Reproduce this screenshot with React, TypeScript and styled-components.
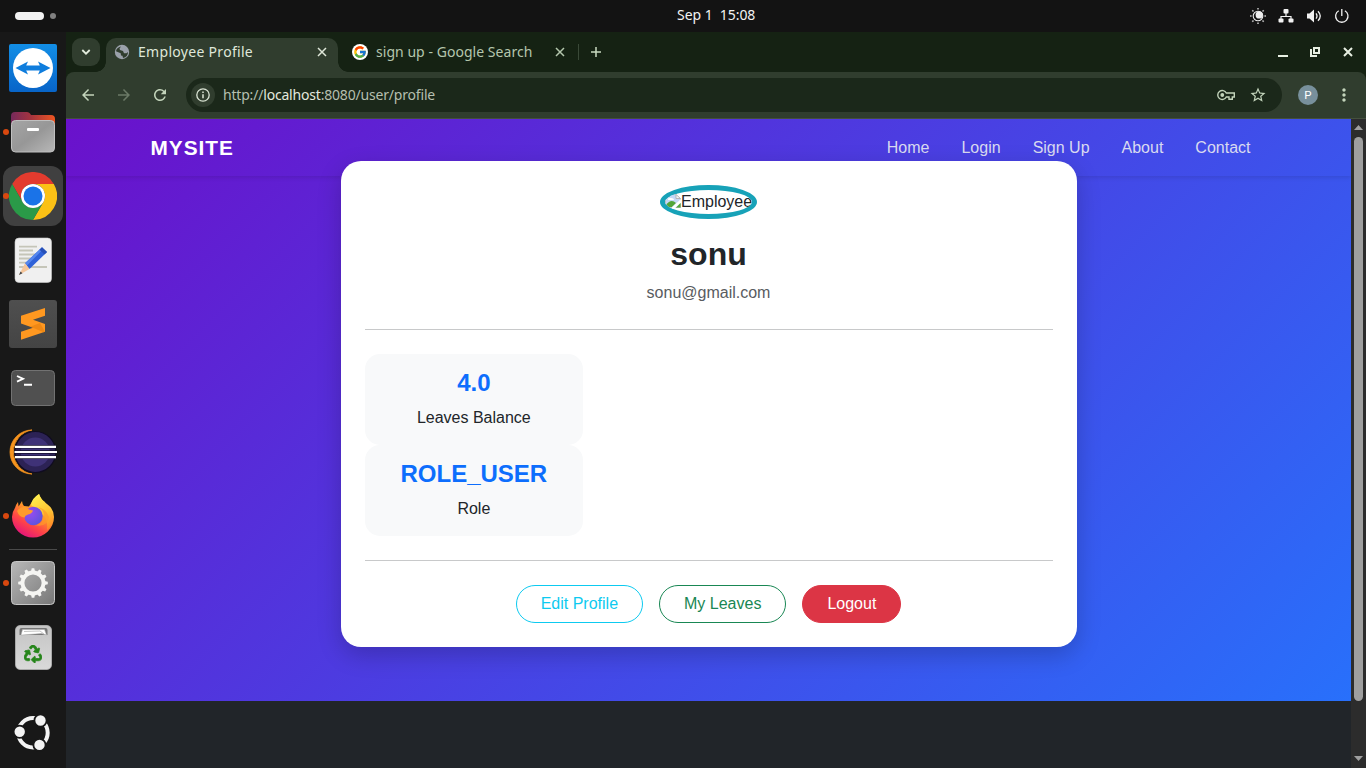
import React from "react";
import styled, { createGlobalStyle } from "styled-components";
import { MdArrowBack, MdArrowForward, MdRefresh, MdStarBorder, MdMoreVert } from "react-icons/md";
import { FaRecycle } from "react-icons/fa";
import { FcGoogle } from "react-icons/fc";

const GlobalStyle = createGlobalStyle`
  * { box-sizing: border-box; }
  body { margin: 0; background: #131313; overflow: hidden; }
  svg { display: block; flex: none; }
  button { font: inherit; }
`;

const uiFont = `"Noto Sans", "Open Sans", sans-serif`;

const Desktop = styled.div`
  width: 1366px;
  height: 768px;
  display: flex;
  flex-direction: column;
  overflow: hidden;
  font-family: ${uiFont};
`;

/* ---------- system bar ---------- */
const TopBar = styled.header`
  height: 32px;
  display: flex;
  align-items: center;
  background: #131313;
  color: #f2f2f2;
`;
const Workspaces = styled.div`
  width: 677px;
  padding-left: 15px;
  display: flex;
  align-items: center;
  gap: 6px;
`;
const WorkspaceDot = styled.span<{ $active?: boolean }>`
  width: ${(p) => (p.$active ? 29 : 6)}px;
  height: ${(p) => (p.$active ? 8 : 6)}px;
  border-radius: 4px;
  background: ${(p) => (p.$active ? "#f2f2f2" : "#808080")};
`;
const Clock = styled.div`
  flex: 1;
  font-size: 14px;
  line-height: 20px;
  letter-spacing: -0.05px;
  white-space: pre;
  padding-bottom: 2px;
`;
const Tray = styled.div`
  display: flex;
  align-items: center;
  gap: 12px;
  padding: 0 16px 1px 0;
`;

/* ---------- dock ---------- */
const Workarea = styled.div`
  flex: 1;
  display: flex;
  min-height: 0;
`;
const Dock = styled.aside`
  width: 66px;
  padding-top: 4px;
  display: flex;
  flex-direction: column;
  align-items: center;
  background: #181818;
`;
const DockItem = styled.div<{ $last?: boolean }>`
  position: relative;
  width: 66px;
  height: 64px;
  display: flex;
  align-items: center;
  justify-content: center;
  margin-top: ${(p) => (p.$last ? "22px" : "0")};
`;
const DockTile = styled.div<{ $focused?: boolean }>`
  width: 60px;
  height: 60px;
  display: flex;
  align-items: center;
  justify-content: center;
  border-radius: 12px;
  background: ${(p) => (p.$focused ? "#404040" : "transparent")};
`;
const RunningDot = styled.span`
  position: absolute;
  left: 3px;
  top: 29px;
  width: 6px;
  height: 6px;
  border-radius: 50%;
  background: #d9480f;
`;
const DockRule = styled.hr`
  width: 48px;
  height: 1px;
  margin: 1px 0;
  border: 0;
  background: #4a4a4a;
`;
const TrashCan = styled.div`
  width: 37px;
  height: 45px;
  border-radius: 5px;
  border: 1px solid #a9a9a9;
  background: linear-gradient(#c4c4c4, #d9d9d9);
  display: flex;
  flex-direction: column;
  align-items: center;
  gap: 9px;
  color: #26851a;
`;

/* ---------- browser ---------- */
const Browser = styled.main`
  flex: 1;
  min-width: 0;
  display: flex;
  flex-direction: column;
  background: #152213;
`;
const TabStrip = styled.div`
  height: 40px;
  display: flex;
  align-items: flex-start;
  padding: 6px 13px 0 6px;
  color: #b4c6ad;
`;
const TabSearch = styled.button`
  width: 28px;
  height: 28px;
  padding: 0;
  margin-right: 6px;
  border: 0;
  border-radius: 9px;
  background: #303d2e;
  color: #e3ecdd;
  display: flex;
  align-items: center;
  justify-content: center;
`;
const Tab = styled.div<{ $active?: boolean }>`
  position: relative;
  width: ${(p) => (p.$active ? 232 : 240)}px;
  height: ${(p) => (p.$active ? 34 : 28)}px;
  padding: ${(p) => (p.$active ? "0 11px 6px 8px" : "0 13px 0 14px")};
  border-radius: 10px 10px 0 0;
  background: ${(p) => (p.$active ? "#303d2e" : "transparent")};
  color: ${(p) => (p.$active ? "#dfe7d9" : "#b4c6ad")};
  display: flex;
  align-items: center;
  gap: 8px;
  &::before, &::after {
    content: "";
    display: ${(p) => (p.$active ? "block" : "none")};
    position: absolute;
    bottom: 0;
    width: 10px;
    height: 10px;
  }
  &::before { left: -10px; background: radial-gradient(circle at 0 0, transparent 9.5px, #303d2e 10px); }
  &::after { right: -10px; background: radial-gradient(circle at 100% 0, transparent 9.5px, #303d2e 10px); }
`;
const TabTitle = styled.span<{ $spacing: number }>`
  flex: 1;
  font-size: 14px;
  line-height: 20px;
  letter-spacing: ${(p) => p.$spacing}px;
  white-space: nowrap;
`;
const GoogleBadge = styled.span`
  width: 16px;
  height: 16px;
  border-radius: 50%;
  background: #fff;
  display: flex;
  align-items: center;
  justify-content: center;
`;
const NewTab = styled.div`
  height: 28px;
  display: flex;
  align-items: center;
  gap: 12px;
  flex: 1;
`;
const TabDivider = styled.span`
  width: 1px;
  height: 16px;
  background: #3a4938;
`;
const WindowButtons = styled.div`
  height: 28px;
  display: flex;
  align-items: center;
  gap: 20px;
  color: #e7efe2;
  svg:last-child { margin-left: 2px; }
`;
const Toolbar = styled.div`
  height: 47px;
  padding: 0 10px 0 10px;
  border-bottom: 1px solid #45503f;
  border-radius: 8px 8px 0 0;
  background: #303d2e;
  display: flex;
  align-items: center;
  color: #c3d4bb;
`;
const NavButton = styled.span<{ $dim?: boolean }>`
  width: 24px;
  height: 24px;
  margin-right: 12px;
  display: flex;
  align-items: center;
  justify-content: center;
  opacity: ${(p) => (p.$dim ? 0.4 : 1)};
`;
const Omnibox = styled.div`
  width: 1096px;
  height: 34px;
  margin-left: 2px;
  padding: 0 15px 0 5px;
  border-radius: 17px;
  background: #1b281a;
  display: flex;
  align-items: center;
`;
const SiteInfo = styled.span`
  width: 24px;
  height: 24px;
  border-radius: 50%;
  background: #303d2e;
  display: flex;
  align-items: center;
  justify-content: center;
`;
const Url = styled.span`
  flex: 1;
  margin-left: 8px;
  font-size: 14px;
  line-height: 20px;
  letter-spacing: -0.19px;
  color: #b5bfaf;
  b { font-weight: 400; color: #e3e9df; }
`;
const OmniActions = styled.span`
  display: flex;
  align-items: center;
  gap: 14px;
`;
const Avatar = styled.span`
  width: 20px;
  height: 20px;
  margin: 0 16px;
  border-radius: 50%;
  background: #78909c;
  color: #fff;
  font: 11.5px/20px Roboto, sans-serif;
  text-align: center;
`;
const Viewport = styled.div`
  flex: 1;
  min-height: 0;
  display: flex;
`;
const Scrollbar = styled.div`
  width: 15px;
  padding: 6px 0 7px;
  background: #2c2c2c;
  display: flex;
  flex-direction: column;
  align-items: center;
`;
const Thumb = styled.span`
  width: 9px;
  height: 564px;
  margin: 7px 0 auto;
  border-radius: 5px;
  background: #9f9f9f;
`;

/* ---------- site ---------- */
const Page = styled.div`
  flex: 1;
  background: #212529;
  color: #212529;
  font: 16px/24px "Liberation Sans", Arial, sans-serif;
`;
const Backdrop = styled.div`
  height: 582px;
  background: linear-gradient(135deg, #6a11cb, #2870fb);
`;
const SiteNav = styled.nav`
  height: 57px;
  box-shadow: 0 2px 4px rgba(0, 0, 0, 0.1);
`;
const NavInner = styled.div`
  width: 1140px;
  height: 58px;
  margin: 0 auto;
  padding: 0 12px;
  display: flex;
  align-items: center;
  justify-content: space-between;
`;
const Brand = styled.a`
  font-size: 20.8px;
  font-weight: 700;
  letter-spacing: 1px;
  color: #fff;
`;
const NavLinks = styled.div`
  display: flex;
`;
const NavLink = styled.a`
  padding: 0 16px;
  color: #d9daf0;
`;
const Card = styled.section`
  width: 736px;
  height: 486px;
  margin: -15px auto 0;
  padding: 24px;
  position: relative;
  border-radius: 20px;
  background: #fff;
  box-shadow: 0 8px 25px rgba(0, 0, 0, 0.2);
  display: flex;
  flex-direction: column;
  align-items: center;
`;
const Portrait = styled.div`
  width: 97px;
  height: 34px;
  border: 5px solid #17a2b8;
  border-radius: 50%;
  overflow: hidden;
  display: flex;
  white-space: nowrap;
  svg { margin-top: 3px; }
`;
const Name = styled.h2`
  margin: 16px 0 8px;
  font-size: 32px;
  line-height: 38.4px;
  font-weight: 700;
`;
const Email = styled.p`
  margin: 0;
  color: #595c5f;
`;
const Rule = styled.hr`
  width: 100%;
  height: 1px;
  margin: 24px 0;
  border: 0;
  flex: none;
  background: #c8c9ca;
`;
const Stats = styled.div`
  align-self: stretch;
  display: flex;
  flex-direction: column;
  align-items: flex-start;
`;
const Stat = styled.div`
  width: 218.66px;
  padding: 15px;
  border-radius: 15px;
  background: #f8f9fa;
  text-align: center;
`;
const StatValue = styled.h4`
  margin: 0 0 8px;
  font-size: 24px;
  line-height: 28.8px;
  font-weight: 700;
  color: #0d6efd;
`;
const Actions = styled.div`
  display: flex;
  gap: 16px;
`;
const Action = styled.button<{ $color: string; $solid?: boolean }>`
  height: 38px;
  padding: 0 24px;
  border: 1px solid ${(p) => p.$color};
  border-radius: 50px;
  background: ${(p) => (p.$solid ? p.$color : "transparent")};
  color: ${(p) => (p.$solid ? "#fff" : p.$color)};
`;

/* ---------- drawings ---------- */
const TeamViewerIcon = () => (
  <svg width="48" height="48" viewBox="0 0 48 48">
    <defs><linearGradient id="tv" x2="0" y2="1"><stop stopColor="#128ee6" /><stop offset="1" stopColor="#0864c8" /></linearGradient></defs>
    <rect width="48" height="48" rx="2" fill="url(#tv)" />
    <circle cx="24" cy="24" r="20" fill="#fff" />
    <path d="M6.5 24 19 17.5 17.2 21.5H30.8L29 17.5 41.5 24 29 30.5 30.8 26.5H17.2L19 30.5Z" fill="#0f7ddd" />
  </svg>
);
const FilesIcon = () => (
  <svg width="48" height="48" viewBox="0 0 48 48">
    <defs>
      <linearGradient id="fb"><stop stopColor="#75295b" /><stop offset=".45" stopColor="#a5343f" /><stop offset="1" stopColor="#ee5521" /></linearGradient>
      <linearGradient id="ff" x2="1" y2="1"><stop stopColor="#a5a5a5" /><stop offset=".5" stopColor="#979797" /><stop offset="1" stopColor="#b8b8b8" /></linearGradient>
    </defs>
    <path d="M2 15V8q0-4 4-4h12q2 0 3 1.500l1 1.500h20q4 0 4 4v10H2Z" fill="url(#fb)" />
    <rect x="2.500" y="12.500" width="43" height="31.500" rx="4" fill="url(#ff)" stroke="#c0c0c0" />
    <rect x="18" y="20" width="12" height="3" rx="1" fill="#fff" />
  </svg>
);
const ChromeIcon = () => (
  <svg width="48" height="48" viewBox="0 0 48 48">
    <path d="M3.200 12A24 24 0 0 1 44.800 12H24A12 12 0 0 0 13.600 30Z" fill="#e33b2e" />
    <path d="M44.800 12A24 24 0 0 1 24 48L34.400 30A12 12 0 0 0 24 12Z" fill="#fbc116" />
    <path d="M24 48A24 24 0 0 1 3.200 12L13.600 30A12 12 0 0 0 34.400 30Z" fill="#2a9a48" />
    <circle cx="24" cy="24" r="12" fill="#fff" />
    <circle cx="24" cy="24" r="9.500" fill="#1a73e8" />
  </svg>
);
const EditorIcon = () => (
  <svg width="48" height="48" viewBox="0 0 48 48">
    <rect x="6" y="2" width="36.500" height="44.500" rx="4" fill="#f0f0f0" stroke="#cfcfcf" strokeWidth=".6" />
    <path d="M10 10.700h18M10 14.500h14M10 18.500h17M10 22.500h13M10 26.700h9M10 31h28" stroke="#c5c5b8" strokeWidth="1.800" />
    <path d="m33 11.300 5 4.700L20.500 33 16 27.300Z" fill="#2f62d8" />
    <path d="m31.500 12.700 1.800 1.300L18 29.500l-2-2.200Z" fill="#5587ee" />
    <path d="m33 11.300 5 4.700-2.500 2.500-5-4.700Z" fill="#2750b8" />
    <path d="M16 27.300 20.500 33 10 39Z" fill="#f4c59a" />
    <path d="m11.500 35.500 2 1.700L10 39Z" fill="#454545" />
  </svg>
);
const SublimeIcon = () => (
  <svg width="48" height="48" viewBox="0 0 48 48">
    <defs><linearGradient id="sb" x2="0" y2="1"><stop stopColor="#4f4f4f" /><stop offset="1" stopColor="#444" /></linearGradient></defs>
    <rect width="48" height="48" rx="3" fill="url(#sb)" />
    <path d="M12 15.700 36 8v7.700l-12 4 12 4.300v7.700l-24 8v-8l12-4-12-4.300Z" fill="#ff9820" />
    <path d="M21 26.700 31 23l5 8.700-1.500.5L24 27.700Z" fill="#e8810f" opacity=".7" />
  </svg>
);
const TerminalIcon = () => (
  <svg width="48" height="48" viewBox="0 0 48 48">
    <rect x="2.500" y="6.500" width="43" height="35" rx="4" fill="#505050" stroke="#727272" />
    <path d="m8 12 6 2.800-6 2.800M15 20.700h8" fill="none" stroke="#fff" strokeWidth="1.900" />
  </svg>
);
const EclipseIcon = () => (
  <svg width="48" height="48" viewBox="0 0 48 48">
    <path d="M23 2A22 22 0 0 0 23 46A22.300 22.300 0 0 1 23 2Z" fill="#f7941e" stroke="#f7941e" strokeWidth=".8" />
    <circle cx="26.300" cy="24" r="20.500" fill="#2c2255" stroke="#100c20" strokeWidth="1.200" />
    <circle cx="26.300" cy="24" r="14.500" fill="#3f3277" />
    <path d="M6.500 18.800h40.500M5.500 24h42M6.500 29.200h40.500" stroke="#17122e" strokeWidth="3.600" />
    <path d="M6 18.800h41M5.500 24h42.500M6 29.200h41" stroke="#fff" strokeWidth="2.200" />
  </svg>
);
const FirefoxIcon = () => (
  <svg width="48" height="48" viewBox="0 0 48 48">
    <defs>
      <linearGradient id="fx" x1=".8" y1=".1" x2=".3" y2=".98"><stop stopColor="#ffe548" /><stop offset=".4" stopColor="#ff9429" /><stop offset=".7" stopColor="#ff4547" /><stop offset="1" stopColor="#e51579" /></linearGradient>
      <linearGradient id="fy" x1=".3" y1="0" x2=".7" y2="1"><stop stopColor="#ffef50" /><stop offset=".6" stopColor="#ffc02e" /><stop offset="1" stopColor="#ff8a28" /></linearGradient>
      <radialGradient id="fp" cx=".3" cy=".3" r=".8"><stop stopColor="#9b4bf0" /><stop offset="1" stopColor="#5a54dc" /></radialGradient>
    </defs>
    <path d="M6 16q.5-3 3-6l.6 4.600L13 9q.2 3 2 5l5 .500Q24 7 30 2q2 6 8 10 7 5 7 13A21 20.500 0 0 1 3 25q0-5 3-9Z" fill="url(#fx)" />
    <path d="M22 13q1-7 8-11 1.500 5 6 8 .5 3 3 6 6 5 4.500 13-1 6-5.500 9 1-10-3-14-5-5-13-11Z" fill="url(#fy)" />
    <circle cx="24.500" cy="24" r="9.200" fill="url(#fp)" />
    <path d="M29 15q8 4 5 12-2 6-9 6 14 3 15-8-3-8-11-10Z" fill="#ff9a2a" opacity=".7" />
    <path d="M8 19q3-4 8-4.500 3 3.500 8 4-1 3-5 4-3 1-3.500 3Q10 25 8 19Z" fill="#ff9b2c" />
  </svg>
);
const teeth = Array.from({ length: 12 }, (_, i) => i * 30);
const SettingsIcon = () => (
  <svg width="48" height="48" viewBox="0 0 48 48">
    <defs><linearGradient id="st" x2="1" y2="1"><stop stopColor="#b8b8b8" /><stop offset="1" stopColor="#777" /></linearGradient></defs>
    <rect x="2.500" y="2.500" width="43" height="43" rx="4" fill="url(#st)" stroke="#c6c6c6" />
    <circle cx="24" cy="24" r="10.500" fill="none" stroke="#f5f5f2" strokeWidth="3.800" />
    {teeth.map((a) => <path key={a} d="m22 12.500.7-3.300h2.600l.7 3.300Z" fill="#f5f5f2" transform={`rotate(${a} 24 24)`} />)}
  </svg>
);
const UbuntuIcon = () => (
  <svg width="38" height="38" viewBox="0 0 38 38">
    <circle cx="19" cy="18.700" r="14.700" fill="none" stroke="#f4f4f4" strokeWidth="4" />
    {[[26.5, 6.5], [5.7, 17.8], [25.5, 30.9]].map(([x, y]) => (
      <circle key={y} cx={x} cy={y} r="6.100" fill="#f4f4f4" stroke="#181818" strokeWidth="1.800" />
    ))}
  </svg>
);
const GlobeIcon = () => (
  <svg width="16" height="16" viewBox="0 0 16 16">
    <circle cx="8" cy="8" r="7.200" fill="#9ba1ab" />
    <path d="M7 2.500 5.500 4.500 6 6l3 1 1 2.200h2.500L14 8q0 5-5 6l-.5-2.200L7 11.500l-.3-2.200L2 7.300Q2.500 3.500 7 2.500Z" fill="#303d2e" />
    <path d="M9 2.800 8 4.500l2 1.200 1.500 1.500L13.500 7Q13 4 9 2.800Z" fill="#9ba1ab" />
  </svg>
);
const Cross = ({ size, weight }: { size: number; weight: number }) => (
  <svg width={size} height={size} viewBox="0 0 10 10"><path d="m1 1 8 8M9 1 1 9" fill="none" stroke="currentColor" strokeWidth={weight} /></svg>
);
const BrokenImage = () => (
  <svg width="16" height="16" viewBox="0 0 16 16">
    <path d="M.5 1.500h10l5 4.500v8.500H.5Z" fill="#c5d8f6" stroke="#b5b9be" />
    <path d="M3 6q1-2 3-1 3 0 3 2H3Z" fill="#fff" />
    <path d="M1 14V12q5-7 10-2l-4 4Z" fill="#52a538" />
    <path d="M16 6 5 16h4l7-6Z" fill="#fff" />
    <path d="M11 1.500v4h4.500Z" fill="#f3f3f3" stroke="#a8a8a8" strokeWidth=".8" />
    <path d="M15.500 10v4.500H11Z" fill="#52a538" />
  </svg>
);

const dockApps = [
  { icon: <TeamViewerIcon /> },
  { icon: <FilesIcon />, running: true },
  { icon: <ChromeIcon />, running: true, focused: true },
  { icon: <EditorIcon /> },
  { icon: <SublimeIcon /> },
  { icon: <TerminalIcon /> },
  { icon: <EclipseIcon /> },
  { icon: <FirefoxIcon />, running: true },
];

const SystemTray = () => (
  <Tray>
    <svg width="16" height="16" viewBox="0 0 16 16">
      <circle cx="8" cy="8" r="4.800" fill="none" stroke="#eee" strokeWidth="1.100" />
      <circle cx="9.200" cy="6.900" r="3.600" fill="#eee" />
      <path d="M8 0v1.600M8 14.400V16M0 8h1.600M14.400 8H16M2.300 2.300l1.200 1.200M12.500 12.500l1.200 1.200M2.300 13.700l1.200-1.200M12.500 3.500l1.200-1.200" stroke="#bbb" strokeWidth="1.600" />
    </svg>
    <svg width="16" height="16" viewBox="0 0 16 16">
      <path d="M8 4v5M3 12V8.500h10V12" fill="none" stroke="#f2f2f2" strokeWidth="1.200" />
      <rect x="5.500" y="1" width="5" height="4.500" rx="1" fill="#f2f2f2" /><rect x=".5" y="10.500" width="5" height="4" rx="1" fill="#f2f2f2" /><rect x="10.500" y="10.500" width="5" height="4" rx="1" fill="#f2f2f2" />
    </svg>
    <svg width="16" height="16" viewBox="0 0 16 16">
      <path d="M1 5.500h2.500L8 1.500v13l-4.500-4H1Z" fill="#f2f2f2" />
      <path d="M10 5.300q2 2.700 0 5.400M12 3.200q4.500 4.800 0 9.600" fill="none" stroke="#f2f2f2" strokeWidth="1.300" />
    </svg>
    <svg width="16" height="16" viewBox="0 0 16 16">
      <path d="M4.700 2.700a6.200 6.200 0 1 0 6.200 0M7.800 1v7" fill="none" stroke="#f2f2f2" strokeWidth="1.300" />
    </svg>
  </Tray>
);

export default function App() {
  return (
    <Desktop>
      <GlobalStyle />
      <TopBar>
        <Workspaces><WorkspaceDot $active /><WorkspaceDot /></Workspaces>
        <Clock>{"Sep 1  15:08"}</Clock>
        <SystemTray />
      </TopBar>
      <Workarea>
        <Dock>
          {dockApps.map((app, i) => (
            <DockItem key={i}>
              <DockTile $focused={app.focused}>{app.icon}</DockTile>
              {app.running && <RunningDot />}
            </DockItem>
          ))}
          <DockRule />
          <DockItem><SettingsIcon /><RunningDot /></DockItem>
          <DockItem>
            <TrashCan>
              <svg width="29" height="10" viewBox="0 0 29 10">
                <path d="M.5 9V4q0-2 2-2h24q2 0 2 2v5Z" fill="#777" />
                <path d="M2 9 3.500 3.500h22L27.500 9l-5-1.500L3 9Z" fill="#fff" stroke="#aaa" strokeWidth=".5" /><path d="m5 5.500 16-.5 4 3" fill="none" stroke="#aaa" strokeWidth=".7" />
              </svg>
              <FaRecycle size={18} stroke="#26851a" strokeWidth={22} />
            </TrashCan>
          </DockItem>
          <DockItem $last><UbuntuIcon /></DockItem>
        </Dock>
        <Browser>
          <TabStrip>
            <TabSearch aria-label="Search tabs">
              <svg width="10" height="10" viewBox="0 0 10 10"><path d="m1.300 3 3.700 3.700L8.700 3" fill="none" stroke="currentColor" strokeWidth="1.800" /></svg>
            </TabSearch>
            <Tab $active>
              <GlobeIcon />
              <TabTitle $spacing={0.3}>Employee Profile</TabTitle>
              <Cross size={10} weight={1.5} />
            </Tab>
            <Tab>
              <GoogleBadge><FcGoogle size={14} /></GoogleBadge>
              <TabTitle $spacing={0.04}>sign up - Google Search</TabTitle>
              <Cross size={10} weight={1.5} />
            </Tab>
            <NewTab>
              <TabDivider />
              <svg width="10" height="10" viewBox="0 0 10 10"><path d="M5 0v10M0 5h10" stroke="#c8d9c0" strokeWidth="1.500" /></svg>
            </NewTab>
            <WindowButtons>
              <svg width="12" height="12" viewBox="0 0 12 12"><path d="M1 10h10" stroke="currentColor" strokeWidth="2" /></svg>
              <svg width="12" height="12" viewBox="0 0 12 12"><path d="M5 2h5v5H5ZM2 3v7h6" fill="none" stroke="currentColor" strokeWidth="2" /></svg>
              <Cross size={10} weight={2} />
            </WindowButtons>
          </TabStrip>
          <Toolbar>
            <NavButton><MdArrowBack size={18} /></NavButton>
            <NavButton $dim><MdArrowForward size={18} /></NavButton>
            <NavButton><MdRefresh size={18} /></NavButton>
            <Omnibox>
              <SiteInfo>
                <svg width="14" height="14" viewBox="0 0 14 14"><circle cx="7" cy="7" r="6.200" fill="none" stroke="#dbe5d5" strokeWidth="1.300" /><path d="M7 6.200v4M7 3.600v1.500" stroke="#dbe5d5" strokeWidth="1.500" /></svg>
              </SiteInfo>
              <Url>http://<b>localhost</b>:8080/user/profile</Url>
              <OmniActions>
                <svg width="18" height="12" viewBox="0 0 18 12">
                  <path d="M9.300 4A4.500 4.500 0 1 0 9.300 8H12v2.300h3.300V8h2V4Z" fill="none" stroke="#c3d4bb" strokeWidth="1.400" />
                  <circle cx="5.300" cy="6" r="1.900" fill="#c3d4bb" />
                </svg>
                <MdStarBorder size={18} />
              </OmniActions>
            </Omnibox>
            <Avatar>P</Avatar>
            <MdMoreVert size={20} />
          </Toolbar>
          <Viewport>
            <Page>
              <Backdrop>
                <SiteNav>
                  <NavInner>
                    <Brand>MYSITE</Brand>
                    <NavLinks>
                      {["Home", "Login", "Sign Up", "About", "Contact"].map((label) => <NavLink key={label}>{label}</NavLink>)}
                    </NavLinks>
                  </NavInner>
                </SiteNav>
                <Card>
                  <Portrait><BrokenImage />Employee</Portrait>
                  <Name>sonu</Name>
                  <Email>sonu@gmail.com</Email>
                  <Rule />
                  <Stats>
                    <Stat><StatValue>4.0</StatValue>Leaves Balance</Stat>
                    <Stat><StatValue>ROLE_USER</StatValue>Role</Stat>
                  </Stats>
                  <Rule />
                  <Actions>
                    <Action $color="#0dcaf0">Edit Profile</Action>
                    <Action $color="#198754">My Leaves</Action>
                    <Action $color="#dc3545" $solid>Logout</Action>
                  </Actions>
                </Card>
              </Backdrop>
            </Page>
            <Scrollbar>
              <svg width="9" height="5" viewBox="0 0 9 5"><path d="M0 5 4.500 0 9 5Z" fill="#9f9f9f" /></svg>
              <Thumb />
              <svg width="9" height="5" viewBox="0 0 9 5"><path d="M0 0 4.500 5 9 0Z" fill="#9f9f9f" /></svg>
            </Scrollbar>
          </Viewport>
        </Browser>
      </Workarea>
    </Desktop>
  );
}
